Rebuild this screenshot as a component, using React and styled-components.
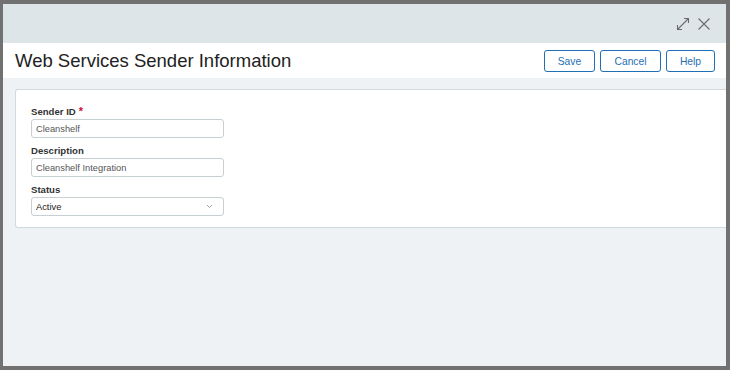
import React from "react";
import styled, { createGlobalStyle } from "styled-components";

const Global = createGlobalStyle`
  html, body { margin: 0; padding: 0; }
  body { font-family: "Liberation Sans", Arial, sans-serif; }
`;

const Backdrop = styled.div`
  width: 730px;
  height: 370px;
  box-sizing: border-box;
  background: #717171;
  padding: 4px 4px 4px 3px;
  display: flex;
`;

const Modal = styled.div`
  flex: 1;
  display: flex;
  flex-direction: column;
  background: #eef2f5;
  overflow: hidden;
`;

const Header = styled.div`
  height: 39px;
  flex: none;
  background: #dde5e8;
  display: flex;
  align-items: center;
  justify-content: flex-end;
  gap: 7px;
  padding: 0 15px 0 0;
`;

const IconButton = styled.span`
  display: inline-flex;
  width: 14px;
  height: 14px;
  color: #6b6b6b;
`;

const TitleBar = styled.div`
  height: 35px;
  flex: none;
  background: #fff;
  display: flex;
  align-items: center;
  justify-content: space-between;
  padding: 0 11px 0 12px;
`;

const Title = styled.h1`
  margin: 0;
  font-size: 18.5px;
  font-weight: 400;
  color: #222;
`;

const Actions = styled.div`
  display: flex;
  gap: 5px;
  padding-top: 1px;
`;

const Button = styled.button`
  height: 22px;
  width: ${(p) => p.$w}px;
  box-sizing: border-box;
  border: 1.5px solid #1f6fb4;
  border-radius: 3px;
  background: #fff;
  color: #1f6fb4;
  font-family: "Liberation Sans", Arial, sans-serif;
  font-size: 10.3px;
  padding: 0;
`;

const Body = styled.div`
  flex: 1;
  padding: 11px 0 0 12px;
`;

const Card = styled.div`
  background: #fff;
  border: 1px solid #d3dadd;
  border-right: none;
  border-radius: 3px 0 0 3px;
  height: 139px;
  box-sizing: border-box;
  padding: 16px 15px 0;
  display: flex;
  flex-direction: column;
`;

const Field = styled.div`
  display: flex;
  flex-direction: column;
  margin-bottom: 7px;
`;

const Label = styled.label`
  font-size: 9.6px;
  font-weight: 700;
  color: #333;
  height: 13px;
  line-height: 11px;
  display: flex;
  gap: 3px;
`;

const Req = styled.span`
  color: #c8102e;
  font-size: 11px;
  line-height: 11px;
`;

const Input = styled.div`
  width: 193px;
  height: 19px;
  box-sizing: border-box;
  border: 1px solid #c8cfd3;
  border-radius: 3px;
  padding: 0 4px;
  display: flex;
  align-items: center;
  justify-content: space-between;
  font-size: 9.3px;
  color: ${(p) => (p.$dark ? "#222" : "#555")};
  background: #fff;
`;

const Chevron = styled.svg`
  width: 7px;
  height: 5px;
  margin-right: 6px;
`;

export default function App() {
  return (
    <>
      <Global />
      <Backdrop>
        <Modal>
          <Header>
            <IconButton>
              <svg width="14" height="14" viewBox="0 0 14 14" fill="none" stroke="currentColor" strokeWidth="1.1">
                <path d="M1.5 12.5 L12.5 1.5" />
                <path d="M8 1.5 H12.5 V6" />
                <path d="M1.5 8 V12.5 H6" />
              </svg>
            </IconButton>
            <IconButton>
              <svg width="14" height="14" viewBox="0 0 14 14" fill="none" stroke="currentColor" strokeWidth="1.1">
                <path d="M1.5 1.5 L12.5 12.5 M12.5 1.5 L1.5 12.5" />
              </svg>
            </IconButton>
          </Header>
          <TitleBar>
            <Title>Web Services Sender Information</Title>
            <Actions>
              <Button $w={51}>Save</Button>
              <Button $w={61}>Cancel</Button>
              <Button $w={49}>Help</Button>
            </Actions>
          </TitleBar>
          <Body>
            <Card>
              <Field>
                <Label>
                  Sender ID <Req>*</Req>
                </Label>
                <Input>Cleanshelf</Input>
              </Field>
              <Field>
                <Label>Description</Label>
                <Input>Cleanshelf Integration</Input>
              </Field>
              <Field>
                <Label>Status</Label>
                <Input $dark>
                  Active
                  <Chevron viewBox="0 0 7 5" fill="none" stroke="#999" strokeWidth="0.9">
                    <path d="M1 1 L3.5 3.5 L6 1" />
                  </Chevron>
                </Input>
              </Field>
            </Card>
          </Body>
        </Modal>
      </Backdrop>
    </>
  );
}
